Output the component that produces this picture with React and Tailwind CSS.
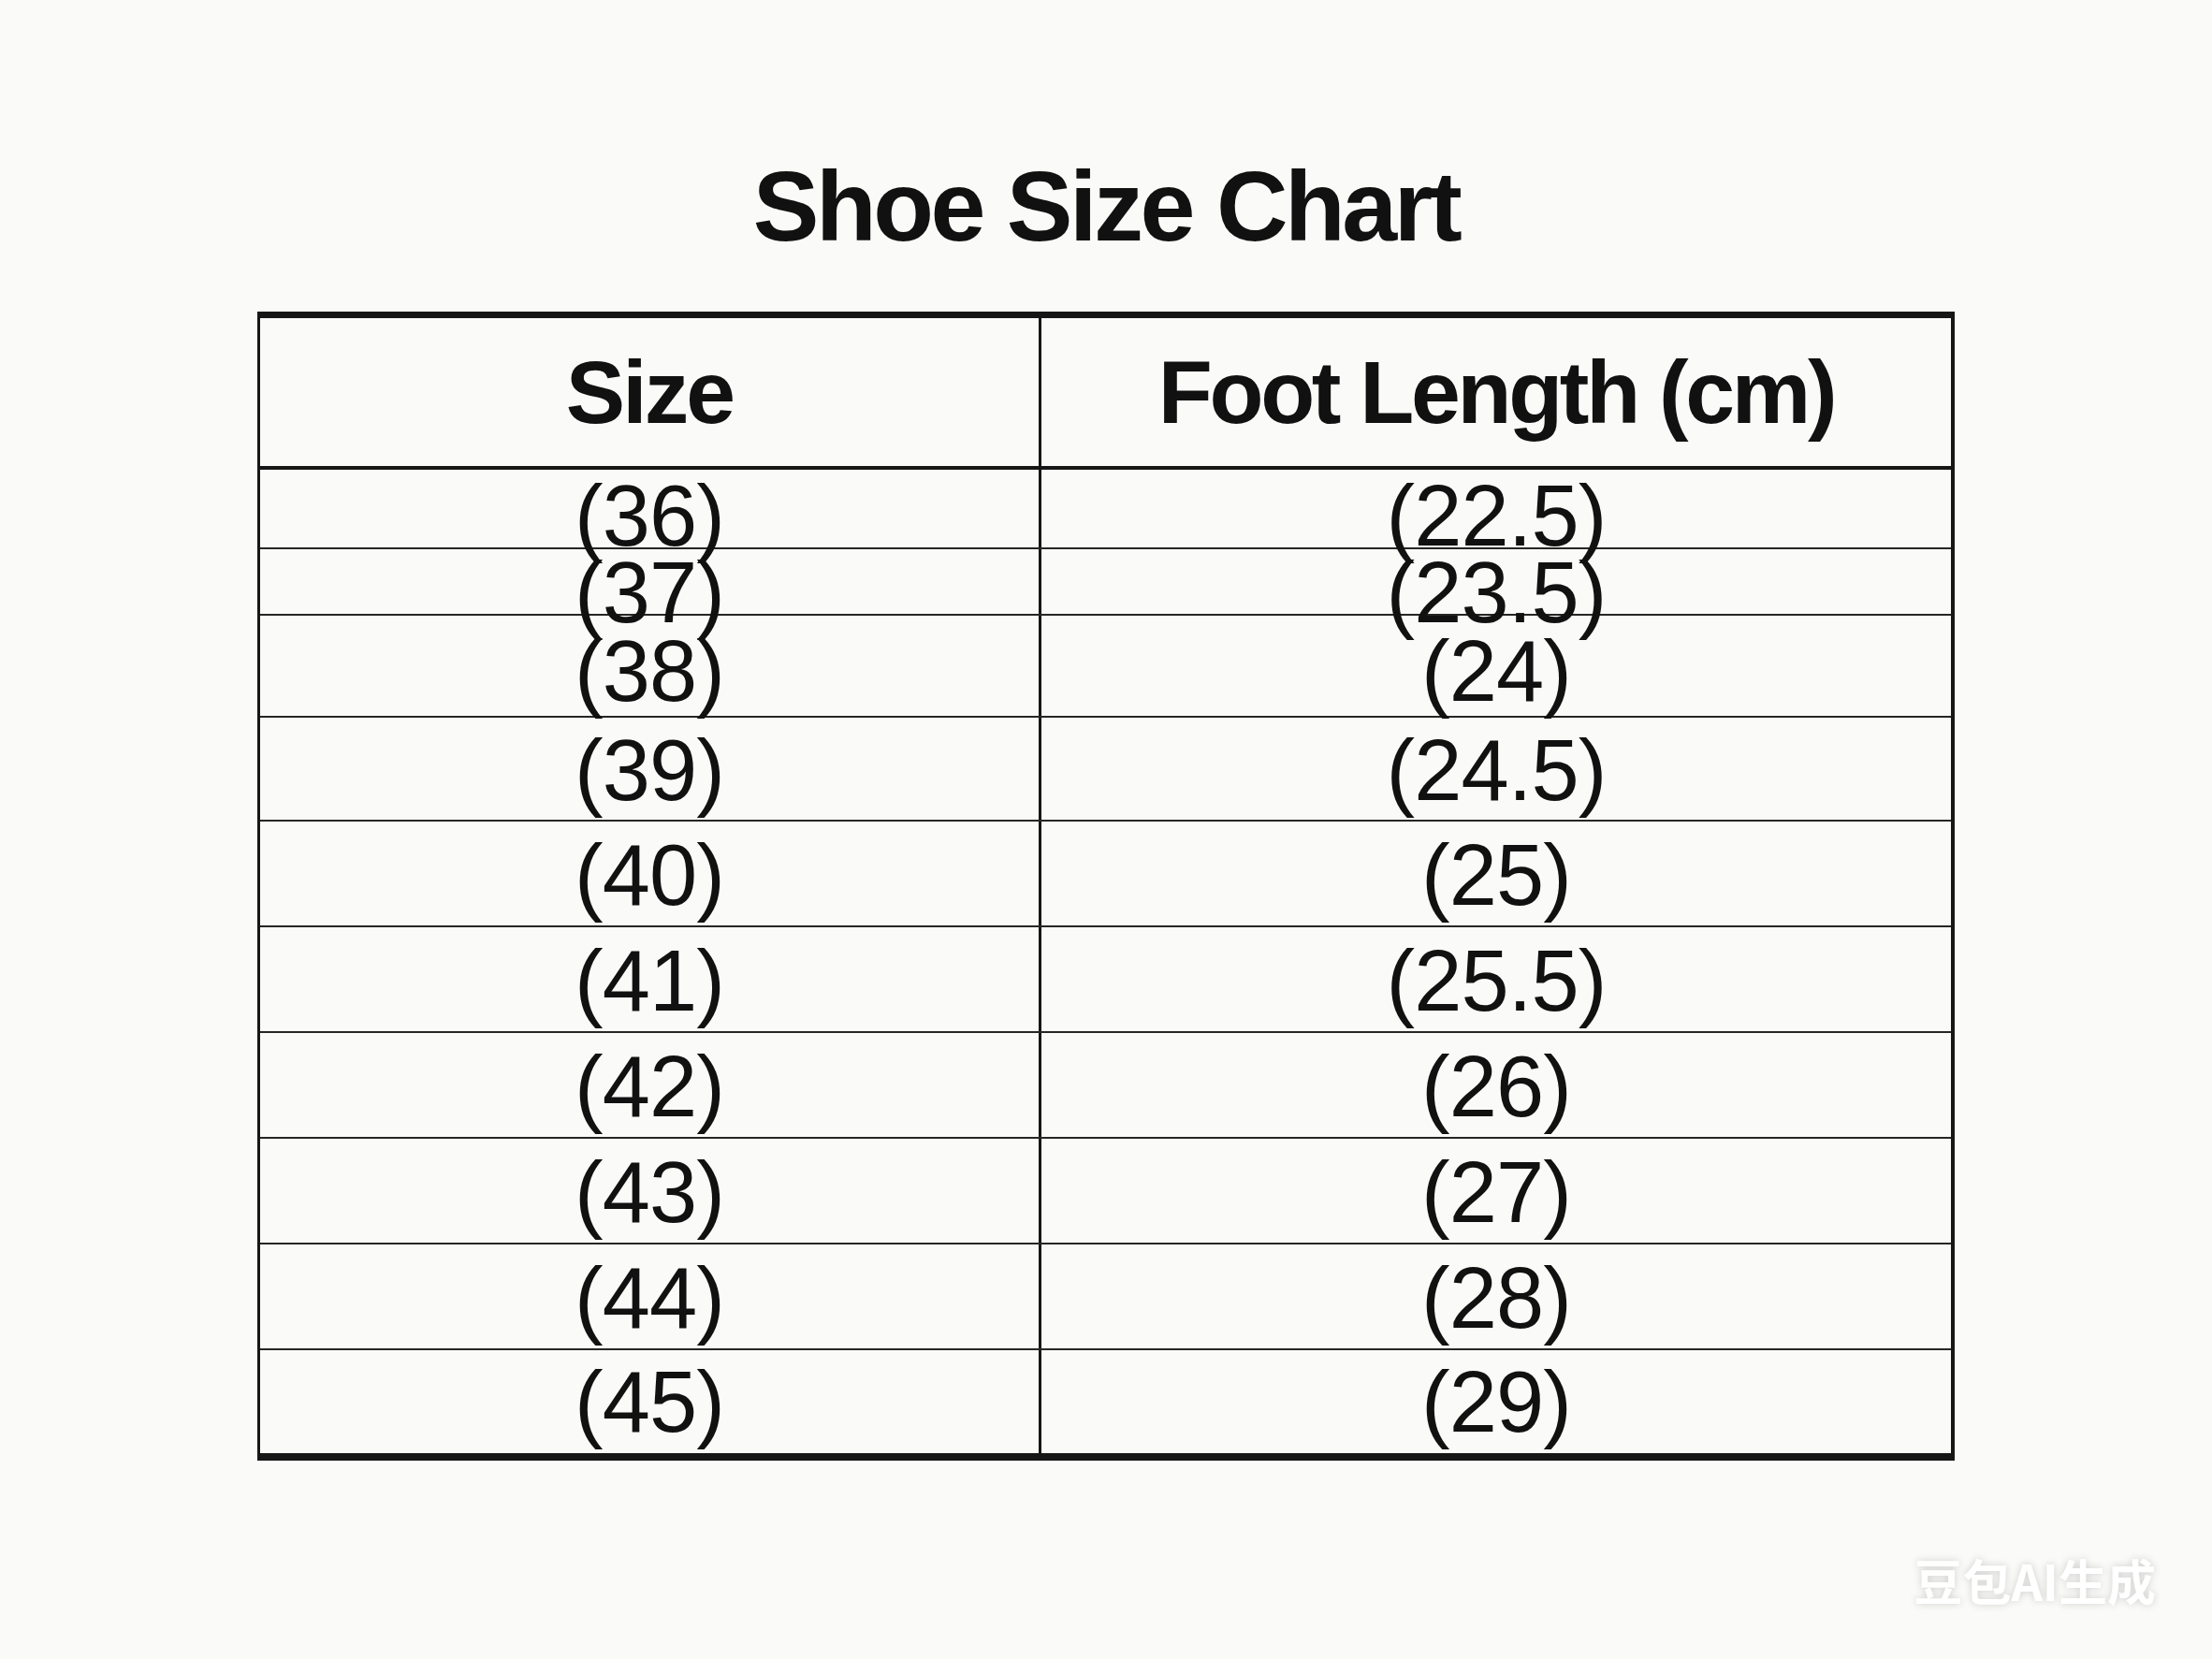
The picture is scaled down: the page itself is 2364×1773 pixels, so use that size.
import React from 'react';

const rows = [
  { size: '(36)', length: '(22.5)', row: 'h-[85px] border-b-2', pad: 'pt-[3px]' },
  { size: '(37)', length: '(23.5)', row: 'h-[71px] border-b-2', pad: 'pt-0' },
  { size: '(38)', length: '(24)', row: 'h-[109px] border-b-2', pad: 'pt-[13px]' },
  { size: '(39)', length: '(24.5)', row: 'h-[111px] border-b-2', pad: 'pt-[10px]' },
  { size: '(40)', length: '(25)', row: 'h-[113px] border-b-2', pad: 'pt-[11px]' },
  { size: '(41)', length: '(25.5)', row: 'h-[113px] border-b-2', pad: 'pt-[11px]' },
  { size: '(42)', length: '(26)', row: 'h-[113px] border-b-2', pad: 'pt-[11px]' },
  { size: '(43)', length: '(27)', row: 'h-[113px] border-b-2', pad: 'pt-[11px]' },
  { size: '(44)', length: '(28)', row: 'h-[113px] border-b-2', pad: 'pt-[11px]' },
  { size: '(45)', length: '(29)', row: 'h-[110px]', pad: 'pt-[9px]' },
];

export default function App() {
  return (
    <div className="relative w-full h-[1773px] bg-[#fafaf8] text-[#111] font-['Liberation_Sans',Arial,sans-serif] overflow-hidden">
      <div className="flex flex-col items-center pt-[167px]">
        <h1 className="text-[106px] leading-none font-bold tracking-[-0.033em]">Shoe Size Chart</h1>

        {/* table */}
        <div className="mt-[60px] w-[1814px] border-l-[3px] border-r-[4px] border-t-[7px] border-b-[8px] border-[#161616]">
          <div className="flex h-[162px] border-b-4 border-[#161616]">
            <div className="w-[835px] border-r-[3px] border-[#161616] flex items-center justify-center text-[95px] leading-none font-bold tracking-[-0.03em]">
              Size
            </div>
            <div className="flex-1 flex items-center justify-center text-[95px] leading-none font-bold tracking-[-0.035em]">
              Foot Length (cm)
            </div>
          </div>

          {rows.map((r) => (
            <div key={r.size} className={`flex border-[#262626] ${r.row}`}>
              <div className={`w-[835px] border-r-[3px] border-[#161616] text-center text-[92px] leading-none tracking-[-0.01em] ${r.pad}`}>
                {r.size}
              </div>
              <div className={`flex-1 text-center text-[92px] leading-none tracking-[-0.01em] ${r.pad}`}>
                {r.length}
              </div>
            </div>
          ))}
        </div>
      </div>

      <div className="absolute right-[60px] bottom-[58px] text-[52px] leading-none font-bold text-white font-['Noto_Sans_CJK_SC',sans-serif] [text-shadow:0_0_8px_rgba(0,0,0,0.18)]">
        豆包AI生成
      </div>
    </div>
  );
}
